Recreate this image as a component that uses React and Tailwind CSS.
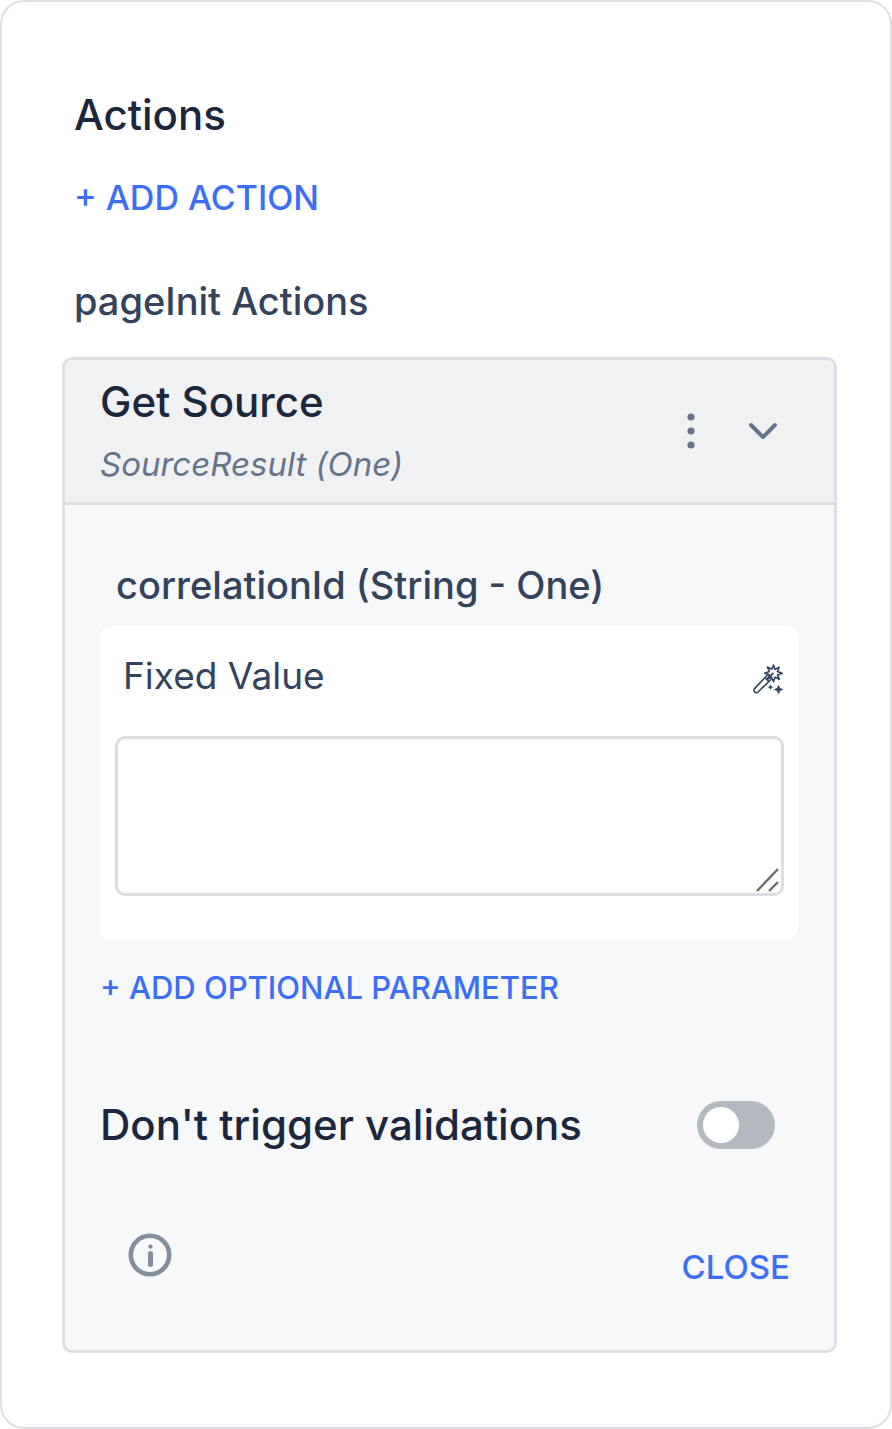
import { useState } from 'react';

function MagicWand() {
    return (
        <svg className="w-8 h-8" viewBox="0 0 32 32" fill="none" stroke="currentColor" strokeWidth="1.6" strokeLinejoin="round" aria-hidden="true">
            <path d="M15.500 12 2.600 25.600a2.400 2.400 0 0 0 0 3.400 2.400 2.400 0 0 0 3.400 0L19.500 16" />
            <path d="m13 14.600 3.800 3.800" />
            <path d="m21.500 2 1.500 4.400 4.100-2.200-1.700 4.300 4.900 1.700-4.800 1.700 1.800 4.300-4.200-2-1.600 4.400-1.800-4.400-4.200 1.800 2-4.200-4.800-1.600 4.600-1.800-1.900-4.400 4.400 2.200z" />
            <path d="m16 15.400 5.500-5.500" />
            <path fill="currentColor" strokeWidth="1" d="m26.500 22.500 1.100 2.900 2.900 1.100-2.900 1.100-1.100 2.900-1.100-2.900-2.900-1.100 2.900-1.100z" />
            <path fill="currentColor" strokeWidth="0.500" d="m18.500 22 .7 1.500 1.500.7-1.500.7-.7 1.500-.7-1.500-1.500-.7 1.500-.7z" />
        </svg>
    );
}

function ActionCard({ title, result }) {
    const [value, setValue] = useState('');
    const [skipValidations, setSkipValidations] = useState(false);

    return (
        <section className="rounded-[10px] border-3 border-[#dddfe3] bg-[#f7f8fa]">
            <header className="flex items-center justify-between rounded-t-[7px] border-b-3 border-[#dddfe3] bg-[#f0f1f3] pt-4 pb-[18px] pl-[35px] pr-[51px]">
                <div>
                    <h3 className="text-[42px] leading-[52px] font-medium text-[#1c263c]">{title}</h3>
                    <p className="mt-4 text-[33px] leading-10 italic text-[#66748b]">{result}</p>
                </div>
                <div className="flex items-center gap-8 text-[#66748b]">
                    <button type="button" aria-label="More options" className="flex w-10 h-12 items-center justify-center">
                        <svg className="w-10 h-12" viewBox="0 0 40 48" fill="currentColor">
                            <circle cx="20" cy="11" r="3.600" />
                            <circle cx="20" cy="25" r="3.600" />
                            <circle cx="20" cy="39" r="3.600" />
                        </svg>
                    </button>
                    <button type="button" aria-label="Collapse" className="flex w-10 h-12 items-center justify-center">
                        <svg className="w-10 h-12" viewBox="0 0 40 48" fill="none" stroke="currentColor" strokeWidth="4" strokeLinecap="round" strokeLinejoin="round">
                            <path d="m8 19 12 12 12-12" />
                        </svg>
                    </button>
                </div>
            </header>

            <div className="pl-[35px] pr-9 pt-[58px] pb-[63px]">
                <label htmlFor="correlationId" className="block pl-4 text-[38px] leading-11 font-medium text-[#33435c]">correlationId (String - One)</label>

                <div className="mt-[19px] rounded-xl bg-white pl-[15px] pr-[14px] pt-7 pb-11">
                    <div className="flex items-center justify-between pl-2">
                        <span className="text-[37px] leading-11 text-[#33435c]">Fixed Value</span>
                        <button type="button" aria-label="Edit expression" className="pt-1.5 text-[#33435c]"><MagicWand /></button>
                    </div>
                    <div className="relative mt-[38px]">
                        <textarea
                            id="correlationId"
                            value={value}
                            onChange={(e) => setValue(e.target.value)}
                            className="block w-full h-40 resize-none rounded-[10px] border-3 border-[#dddee3] bg-white p-4 text-[33px] leading-10 text-[#33435c] outline-none"
                        />
                        <svg className="pointer-events-none absolute right-1 bottom-1 w-6 h-6" viewBox="0 0 24 24" stroke="#6b6b6b" strokeWidth="2.400">
                            <path d="M1 23 22 1M13 23l9-9" />
                        </svg>
                    </div>
                </div>

                <button type="button" className="mt-7 block text-[31px] leading-10 font-medium text-[#3c6ff7]">+ ADD OPTIONAL PARAMETER</button>

                <div className="mt-[91px] flex items-center justify-between pr-[23px]">
                    <label htmlFor="skipValidations" className="text-[42px] leading-[52px] font-medium text-[#1c263c]">Don't trigger validations</label>
                    <input
                        id="skipValidations"
                        type="checkbox"
                        role="switch"
                        checked={skipValidations}
                        onChange={(e) => setSkipValidations(e.target.checked)}
                        className="flex w-[78px] h-12 appearance-none items-center rounded-full bg-[#b3b8c1] px-1.5 before:size-9 before:rounded-full before:bg-white checked:justify-end checked:bg-[#3c6ff7]"
                    />
                </div>

                <div className="mt-[82px] flex justify-between pl-7 pr-2">
                    <button type="button" aria-label="Information" className="self-start text-[#848f9e]">
                        <svg className="w-11 h-11" viewBox="0 0 44 44" fill="none" stroke="currentColor" strokeWidth="4.600">
                            <circle cx="22" cy="22" r="19.200" />
                            <path d="M22.500 20.500v11" strokeWidth="5" strokeLinecap="round" />
                            <circle cx="22.500" cy="13.600" r="2.200" fill="currentColor" stroke="none" />
                        </svg>
                    </button>
                    <button type="button" className="mt-3.5 text-[33px] leading-10 font-medium text-[#3c6ff7]">CLOSE</button>
                </div>
            </div>
        </section>
    );
}

export default function App() {
    return (
        <main className="min-h-screen rounded-3xl border-2 border-[#dce0e5] bg-white pt-[87px] pb-[74px] pl-[60px] pr-[53px] font-['Inter',sans-serif]">
            <div className="pl-3">
                <h1 className="text-[42px] leading-[52px] font-medium text-[#1c263c]">Actions</h1>
                <button type="button" className="mt-[37px] block text-[34px] leading-10 font-medium text-[#3c6ff7]">+ ADD ACTION</button>
                <h2 className="mt-[61px] mb-[34px] text-[38px] leading-11 font-medium text-[#33435c]">pageInit Actions</h2>
            </div>
            <ActionCard title="Get Source" result="SourceResult (One)" />
        </main>
    );
}
